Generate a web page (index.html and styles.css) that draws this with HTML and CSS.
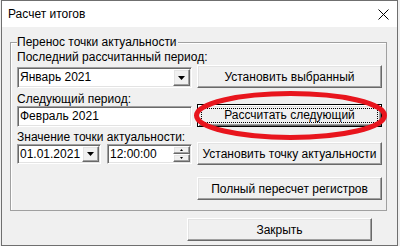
FILE: index.html
```html
<!DOCTYPE html>
<html lang="ru">
<head>
  <meta charset="UTF-8">
  <title>Расчет итогов</title>
  <meta name="viewport" content="width=device-width, initial-scale=1.0">
  <link rel="stylesheet" href="styles.css">
</head>

<body>
  <div class="window">
    <div class="titlebar">
      <span class="title">Расчет итогов</span>
      <svg class="close" width="11" height="11" viewBox="0 0 11 11">
        <path d="M0.5 0.5 L10.5 10.5 M10.5 0.5 L0.5 10.5" stroke="#000" stroke-width="1" fill="none"/>
      </svg>
    </div>

    <div class="content">
      <div class="group">
        <div class="legend">Перенос точки актуальности</div>
        <div class="group-body">
          <div class="col-left">
            <div class="label">Последний рассчитанный период:</div>
            <div class="field combo">
              <span class="value">Январь 2021</span>
              <span class="drop">
                <svg width="7" height="4" viewBox="0 0 7 4"><polygon points="0,0 7,0 3.5,4" fill="#000"/></svg>
              </span>
            </div>

            <div class="label label-next">Следующий период:</div>
            <div class="field">
              <span class="value">Февраль 2021</span>
            </div>

            <div class="label label-point">Значение точки актуальности:</div>
            <div class="row">
              <div class="field date">
                <span class="value">01.01.2021</span>
                <span class="drop">
                  <svg width="7" height="4" viewBox="0 0 7 4"><polygon points="0,0 7,0 3.5,4" fill="#000"/></svg>
                </span>
              </div>
              <div class="field time">
                <span class="value">12:00:00</span>
                <span class="spin">
                  <span class="spin-btn">
                    <svg width="3" height="2" viewBox="0 0 3 2"><polygon points="1.5,0 3,2 0,2" fill="#000"/></svg>
                  </span>
                  <span class="spin-btn">
                    <svg width="3" height="2" viewBox="0 0 3 2"><polygon points="0,0 3,0 1.5,2" fill="#000"/></svg>
                  </span>
                </span>
              </div>
            </div>
          </div>

          <div class="col-right">
            <button class="btn btn-set">Установить выбранный</button>
            <button class="btn btn-default"><span class="focus">Рассчитать следующий</span></button>
            <button class="btn btn-point">Установить точку актуальности</button>
            <button class="btn btn-full">Полный пересчет регистров</button>
          </div>
        </div>
      </div>

      <div class="footer">
        <button class="btn">Закрыть</button>
      </div>
    </div>

    <svg class="mark" width="398" height="246" viewBox="0 0 398 246">
      <ellipse cx="289.5" cy="115.5" rx="94" ry="22" fill="none" stroke="#e8151d" stroke-width="5"/>
    </svg>
  </div>
</body>
</html>
```

FILE: styles.css
```css
* {
  box-sizing: border-box;
}

body {
  margin: 0;
  background-color: #f0f0f0;
  font-family: "Liberation Sans", Arial, sans-serif;
  font-size: 12px;
  color: #000;
}

.window {
  position: relative;
  margin-left: 1px;
  width: 397px;
  height: 246px;
  border: 1px solid #6f6f6f;
  background-color: #f0f0f0;
}

.titlebar {
  height: 26px;
  background-color: #fff;
  display: flex;
  align-items: center;
  padding-left: 6px;
  padding-right: 8px;
}

.title {
  font-size: 12px;
  flex: 1;
}

.close {
  display: block;
}

.content {
  padding: 15px 10px 0 8px;
}

.group {
  border: 1px solid #a0a0a0;
  box-shadow: inset 1px 1px 0 #fff;
  height: 169px;
  padding: 0 4px 0 6px;
}

.legend {
  width: fit-content;
  margin-top: -7px;
  margin-left: 0;
  padding: 0 1px 0 0;
  line-height: 13px;
  background-color: #f0f0f0;
}

.group-body {
  display: flex;
  gap: 5px;
  margin-top: 1px;
}

.col-left {
  width: 175px;
  display: flex;
  flex-direction: column;
}

.col-right {
  width: 185px;
  display: flex;
  flex-direction: column;
}

.label {
  line-height: 13px;
  margin-top: 1px;
  margin-bottom: 3px;
  white-space: nowrap;
}

.label-next {
  margin-top: 5px;
  margin-bottom: 0;
}

.label-point {
  margin-top: 4px;
  margin-bottom: 0;
}

.field {
  height: 21px;
  display: flex;
  align-items: stretch;
  background-color: #fff;
  border: 1px solid;
  border-color: #a0a0a0 #fff #fff #a0a0a0;
  box-shadow: inset 1px 1px 0 #696969, inset -1px -1px 0 #e3e3e3;
  padding: 1px;
}

.value {
  flex: 1;
  padding-left: 1px;
  line-height: 17px;
  white-space: nowrap;
}

.drop,
.spin-btn {
  background-color: #f0f0f0;
  border: 1px solid;
  border-color: #fff #696969 #696969 #fff;
  box-shadow: inset -1px -1px 0 #a0a0a0, inset 1px 1px 0 #e3e3e3;
  display: flex;
  align-items: center;
  justify-content: center;
}

.drop {
  width: 17px;
}

.drop svg,
.spin-btn svg {
  display: block;
}

.row {
  display: flex;
  gap: 6px;
}

.date {
  width: 84px;
  height: 20px;
}

.time {
  width: 85px;
  height: 20px;
}

.spin {
  width: 17px;
  display: flex;
  flex-direction: column;
}

.spin-btn {
  flex: 1;
}

.btn {
  font-family: inherit;
  font-size: 12px;
  color: #000;
  height: 23px;
  padding: 0;
  background-color: #f0f0f0;
  border: 1px solid;
  border-color: #fff #696969 #696969 #fff;
  box-shadow: inset -1px -1px 0 #a0a0a0, inset 1px 1px 0 #e3e3e3;
  white-space: nowrap;
}

.btn-set {
  margin-top: 15px;
}

.btn-default {
  margin-top: 16px;
  border-color: #000;
  box-shadow: inset 1px 1px 0 #fff, inset -1px -1px 0 #696969, inset 2px 2px 0 #e3e3e3, inset -2px -2px 0 #a0a0a0;
  padding: 3px;
  display: flex;
}

.focus {
  flex: 1;
  border: 1px dotted #000;
  line-height: 13px;
}

.btn-point {
  margin-top: 15px;
}

.btn-full {
  margin-top: 12px;
}

.footer {
  display: flex;
  justify-content: flex-end;
  padding-right: 15px;
  margin-top: 7px;
}

.footer .btn {
  width: 185px;
}

.mark {
  position: absolute;
  left: -1px;
  top: -1px;
  pointer-events: none;
}
```
